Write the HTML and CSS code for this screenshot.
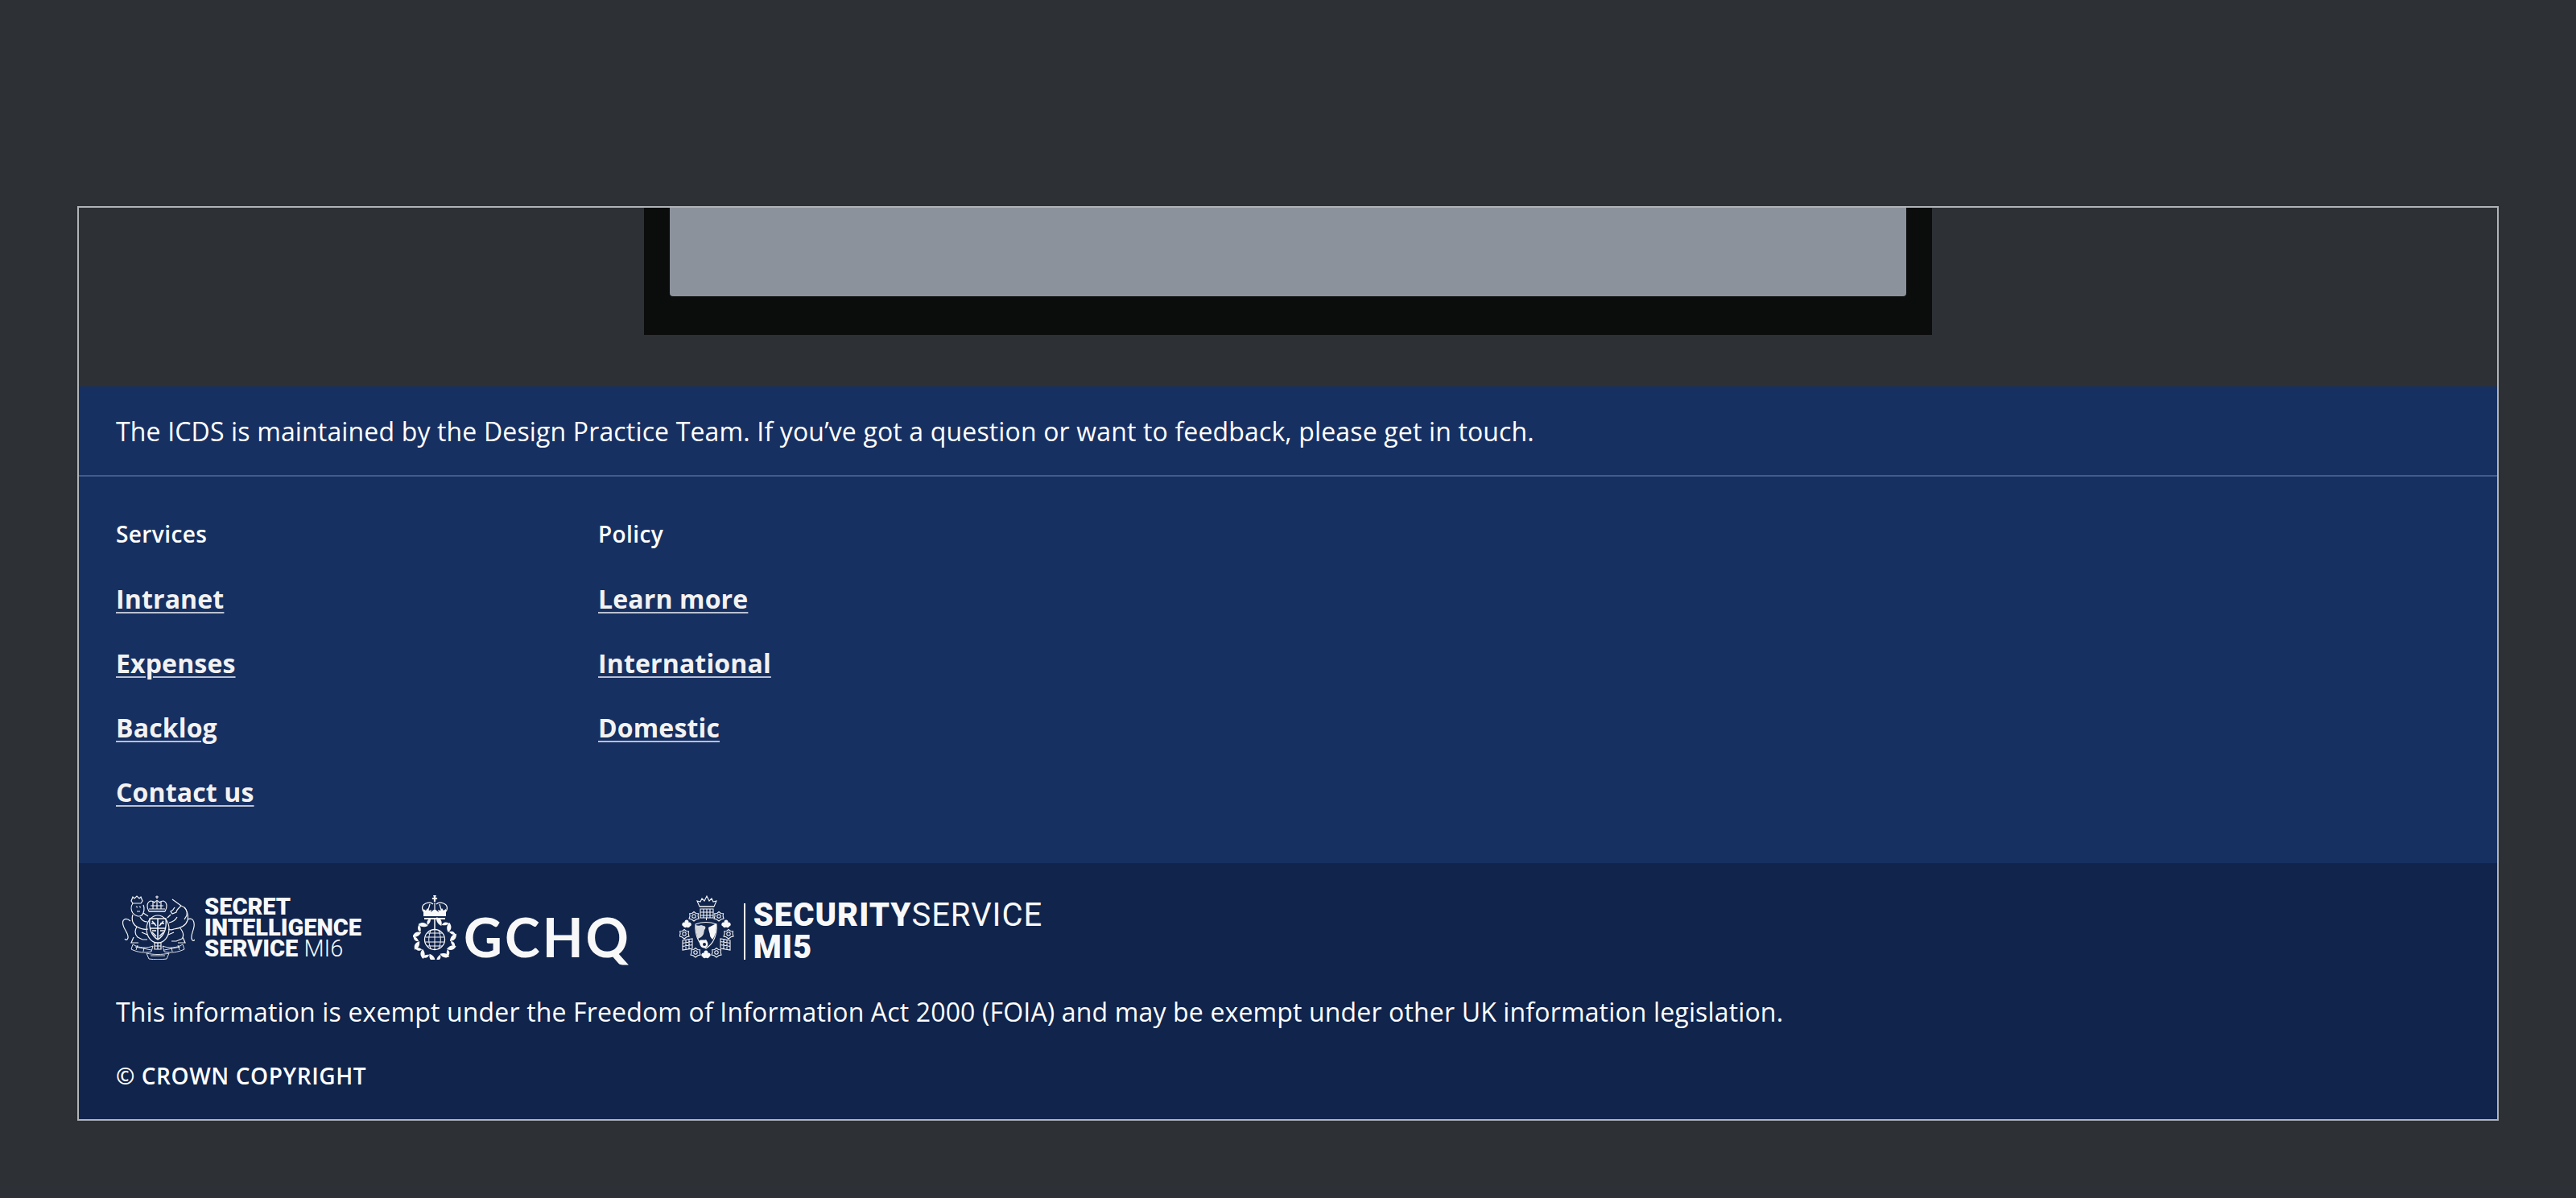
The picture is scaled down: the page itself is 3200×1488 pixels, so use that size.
FILE: index.html
```html
<!DOCTYPE html>
<html lang="en">
<head>
  <meta charset="UTF-8" />
  <title>ICDS footer</title>
  <link rel="stylesheet" href="styles.css">
</head>
<body>

<div class="frame">
  <div class="stage">
    <div class="nav-shell">
      <div class="nav-panel"></div>
    </div>
  </div>

  <footer>
    <p class="maintained">The ICDS is maintained by the Design Practice Team. If you’ve got a question or want to feedback, please get in touch.</p>

    <div class="link-groups">
      <div class="link-group">
        <h2>Services</h2>
        <a href="#">Intranet</a>
        <a href="#">Expenses</a>
        <a href="#">Backlog</a>
        <a href="#">Contact us</a>
      </div>
      <div class="link-group">
        <h2>Policy</h2>
        <a href="#">Learn more</a>
        <a href="#">International</a>
        <a href="#">Domestic</a>
      </div>
    </div>

    <div class="legal">
      <div class="logos">
        <!-- SIS -->
        <div class="logo logo-sis">
          <svg class="crest-sis" width="90" height="80" viewBox="0 0 90 80" fill="none" stroke="#f4f5f7" stroke-width="1.200">
            <!-- crown -->
            <path d="M43 0.500v4M41 2h4"/>
            <path d="M33 20c-3-5-3-11 2-13 2 0 4 1 5 2 1-3 5-3 6 0 1-1 3-2 5-2 5 2 5 8 2 13z"/>
            <path d="M33 17h20M33 20h20M38 8v9M43 6v11M48 8v9M35 13l16 0"/>
            <!-- shield and garter -->
            <ellipse cx="44" cy="42" rx="14" ry="17"/>
            <path d="M34 29h20c1 10 0 20-10 26-10-6-11-16-10-26z" stroke-width="1.300"/>
            <path d="M44 29v26M34 41h20M37 32l5 6M51 32l-5 6M37 46l5 5M51 46l-5 5M36 35h5M47 35h5M37 44h5M47 44h5" stroke-width="1.500"/>
            <!-- lion -->
            <path d="M11 7l2-5 2 2 3-3 3 3 2-2 2 5-2 3H13z"/>
            <path d="M13 10c-3 4-2 9 0 12 3 4 8 5 11 3 3-3 4-9 2-13M17 14l2 1M21 14l2 1M18 20h4M26 22l6 4"/>
            <path d="M13 24c-2 7 0 12 5 15 5 3 10 4 14 3M22 27c2 4 5 6 9 6M18 39c-3 5-3 9 1 13l6 3h6M10 32C4 27-1 30 1 37c1 6 7 10 6 16-1 3-3 3-4 1M14 52l-3 7h9M24 46l7 3"/>
            <!-- unicorn -->
            <path d="M62 5l11 8c6 2 8 7 7 12l-3 5M73 13c-2 2-6 5-6 8l-5 2-2-3c3-1 4-3 5-5M60 24l-4 4"/>
            <path d="M77 15c4 5 5 11 4 16-2 7-10 10-17 11-2 1-5 1-7 0M68 27c-2 4-5 6-10 7M72 41c4 5 5 9 2 13l-7 3h-6M81 30c6-3 9 2 8 9-1 6-4 10-3 15 1 3 3 3 4 1M75 52l3 7h-9M64 46l-7 3"/>
            <!-- motto -->
            <path d="M13 61c8 5 18 5 25 2l-2 7c-8 2-17 1-25-3zM16 64l20 4M19 62l-2 6M27 65l-1 5" stroke-width="0.900"/>
            <path d="M75 61c-8 5-18 5-25 2l2 7c8 2 17 1 25-3zM72 64l-20 4M69 62l2 6M61 65l1 5" stroke-width="0.900"/>
            <path d="M30 72c9 2 19 2 28 0l-3 7c-7 1-15 1-22 0zM35 75l18 0" stroke-width="0.900"/>
            <path d="M40 59h8v8h-8zM44 59v8M40 63h8" stroke-width="1.200"/>
          </svg>
          <div class="sis-text">SECRET<br>INTELLIGENCE<br>SERVICE <span>MI6</span></div>
        </div>

        <!-- GCHQ -->
        <div class="logo logo-gchq">
          <svg class="crest-gchq" width="54" height="80" viewBox="0 0 54 80">
            <defs>
              <path id="laurel" d="M27 36c-6 0-9-3-10-7 6-1 9 2 10 7zM27 35c4-1 6-3 7-6-5 0-7 2-7 6z"/>
            </defs>
            <g fill="none" stroke="#f8f8f8" stroke-width="1.200">
              <path d="M14 21c-4-4-3-9 2-11 3-1 7-1 9 1M40 21c4-4 3-9-2-11-3-1-7-1-9 1"/>
              <path d="M27 9v8M21 11l-2 7M33 11l2 7"/>
            </g>
            <g fill="#f8f8f8">
              <path d="M25.500 1a1.800 1.800 0 1 1 3 0l-.4 2h2v2h-2v3h-2.200V5h-2V3h2z"/>
              <path d="M16 19l2-3 2 3 3-1-1 3 5-4 5 4-1-3 3 1 2-3 2 3 3-2v9H13v-9z"/>
              <path d="M14 28h26v2H14z"/>
              <use href="#laurel" transform="rotate(-26 27 55)"/>
              <use href="#laurel" transform="rotate(26 27 55)"/>
              <use href="#laurel" transform="rotate(-62 27 55)"/>
              <use href="#laurel" transform="rotate(62 27 55)"/>
              <use href="#laurel" transform="rotate(-96 27 55)"/>
              <use href="#laurel" transform="rotate(96 27 55)"/>
              <use href="#laurel" transform="rotate(-128 27 55)"/>
              <use href="#laurel" transform="rotate(128 27 55)"/>
              <use href="#laurel" transform="rotate(-160 27 55)"/>
              <use href="#laurel" transform="rotate(160 27 55)"/>
            </g>
            <g fill="none" stroke="#f8f8f8">
              <path d="M27 30v13" stroke-width="1.500"/>
              <circle cx="27" cy="55" r="12.500" stroke-width="1.300"/>
              <path d="M27 43v24M22 44c-3 7-3 15 0 22M32 44c3 7 3 15 0 22M17.500 47h19M15.500 52h23M15.500 58h23M17.500 63h19" stroke-width="1"/>
            </g>
          </svg>
          <span class="gchq-text">GCHQ</span>
        </div>

        <!-- MI5 -->
        <div class="logo logo-mi5">
          <svg class="crest-mi5" width="68" height="80" viewBox="0 0 68 80">
            <defs>
              <g id="rose" fill="none" stroke="#f4f5f7" stroke-width="1.100">
                <path d="M0-5.500l2.500 2 3 .2-.4 3L6 3 3 3.800 0 6-3 3.800-6 3l1.100-3.300-.4-3 3-.2z"/>
                <circle r="2.200"/>
              </g>
              <path id="flower" fill="#f8f8f8" d="M0-5.500a2.500 2.500 0 0 1 2.400 3.200 2.500 2.500 0 0 1 1.700 4.700A2.500 2.500 0 0 1 0 3.500 2.500 2.500 0 0 1-4.100 2.400a2.500 2.500 0 0 1 1.700-4.700A2.500 2.500 0 0 1 0-5.500z"/>
              <path id="gate" fill="none" stroke="#f4f5f7" stroke-width="1.100" d="M-6-5L6-7V5L-6 7zM-2-5.500V5.500M2-6V6M-6-1.500L6-3.500M-6 2.500L6 .5"/>
            </defs>
            <g fill="none" stroke="#f4f5f7" stroke-width="1.100">
              <path d="M25 14l-3-7 4 1 2-4 3 3 3-6 3 6 3-3 2 4 4-1-3 7z"/>
              <path d="M25 14h18M26 17h16v11H26zM30 17v11M34 17v11M38 17v11M26 21h16M26 25h16"/>
              <path d="M33.500 28v3"/>
            </g>
            <use href="#rose" x="18" y="26"/>
            <use href="#rose" x="49" y="26"/>
            <use href="#rose" x="6" y="48"/>
            <use href="#rose" x="61" y="48"/>
            <use href="#rose" x="20" y="71"/>
            <use href="#rose" x="46" y="71"/>
            <use href="#flower" x="9" y="36"/>
            <use href="#flower" x="58" y="36"/>
            <use href="#flower" x="33" y="74"/>
            <use href="#gate" x="10" y="61"/>
            <use href="#gate" transform="matrix(-1 0 0 1 57 61)"/>
            <g fill="#f8f8f8">
              <path d="M20 37c3 1 5 1 7 0l3 1c3 0 3 3 1 5l-1 5c-1 3-4 5-7 6-1-3-3-11-3-17z" opacity=".85"/>
              <path d="M36 40l10-5c0 8-1 15-5 20-1-2-3-3-3-5 0-3-2-6-2-10z"/>
              <path d="M25 56c2-1 7 0 8-1 2 3 3 5 2 8-2 3-6 3-8 1-2-2-2-5-2-8z"/>
            </g>
            <path d="M20 36c8-3 18-3 26 0 1 12-3 24-13 30-10-6-14-18-13-30z" fill="none" stroke="#f4f5f7" stroke-width="1.100"/>
            <circle cx="31" cy="61" r="2" fill="#10244c"/>
          </svg>
          <div class="mi5-rule"></div>
          <div class="mi5-text">
            <div class="mi5-line"><strong>SECURITY</strong><span>SERVICE</span></div>
            <div class="mi5-line"><strong>MI5</strong></div>
          </div>
        </div>
      </div>

      <p class="foia">This information is exempt under the Freedom of Information Act 2000 (FOIA) and may be exempt under other UK information legislation.</p>
      <p class="copyright">© CROWN COPYRIGHT</p>
    </div>
  </footer>
</div>

</body>
</html>
```

FILE: styles.css
```css
html, body {
  margin: 0;
  padding: 0;
}

body {
  background: #2d3035;
  font-family: "Open Sans", sans-serif;
  color: #ffffff;
  letter-spacing: 0.15px;
  height: 1488px;
  padding: 256px 96px 0;
  box-sizing: border-box;
  overflow: hidden;
}

.frame {
  border: 2px solid #b1b4b6;
  height: 1136px;
  box-sizing: border-box;
  display: flex;
  flex-direction: column;
}

.stage {
  height: 222px;
  display: flex;
  justify-content: center;
  flex-shrink: 0;
}

.nav-shell {
  width: 1600px;
  height: 158px;
  box-sizing: border-box;
  background: #0b0c0c;
  padding: 0 32px 48px;
}

.nav-panel {
  height: 110px;
  background: #8b929c;
  border-radius: 0 0 4px 4px;
}

footer {
  flex: 1;
  background: #173062;
  display: flex;
  flex-direction: column;
}

.maintained {
  margin: 0;
  font-size: 32px;
  line-height: 48px;
  padding: 32px 46px 30px;
  border-bottom: 2px solid #445c8a;
}

.link-groups {
  display: flex;
  padding: 51px 46px 0;
  height: 480px;
  box-sizing: border-box;
}

.link-group {
  width: 599px;
  display: flex;
  flex-direction: column;
  align-items: flex-start;
}

.link-group h2 {
  margin: 0 0 37px;
  font-size: 28px;
  line-height: 40px;
  font-weight: 600;
  letter-spacing: 0.4px;
}

.link-group a {
  color: #f3f2f1;
  font-size: 32px;
  font-weight: 700;
  line-height: 48px;
  margin-bottom: 32px;
  text-decoration: underline;
  text-decoration-color: #b9c1d2;
  text-decoration-thickness: 2px;
  text-underline-offset: 4px;
}

.legal {
  flex: 1;
  background: #10244c;
  padding: 40px 46px 0;
}

.logos {
  display: flex;
  align-items: center;
  gap: 64px;
  height: 80px;
}

.logo {
  display: flex;
  align-items: center;
}

.crest-sis {
  margin-left: 8px;
  margin-right: 12px;
}

.sis-text {
  font-family: "Roboto", sans-serif;
  font-weight: 900;
  font-size: 29px;
  line-height: 26px;
  letter-spacing: 0;
  color: #f8f8f8;
}

.sis-text span {
  font-weight: 300;
}

.logo-gchq {
  align-self: stretch;
  margin-right: -4px;
}

.crest-gchq {
  margin-right: 9px;
}

.gchq-text {
  font-family: "Lato", sans-serif;
  font-weight: 700;
  font-size: 66px;
  line-height: 48px;
  letter-spacing: 3px;
  color: #f8f8f8;
  align-self: flex-end;
  margin-bottom: 4px;
}

.crest-mi5 {
  margin-right: 12px;
}

.mi5-rule {
  width: 2px;
  height: 70px;
  background: #f8f8f8;
  margin: 10px 10px 0 0;
}

.mi5-text {
  font-family: "Roboto", sans-serif;
  font-size: 40px;
  line-height: 40px;
  letter-spacing: 1px;
  color: #f8f8f8;
  margin-top: 10px;
}

.mi5-line {
  height: 40px;
}

.mi5-text strong {
  font-weight: 900;
}

.mi5-text span {
  font-weight: 400;
}

.foia {
  margin: 41px 0 0;
  font-size: 32px;
  line-height: 48px;
}

.copyright {
  margin: 35px 0 0;
  font-size: 28px;
  line-height: 40px;
  letter-spacing: 0.6px;
  font-weight: 600;
}
```
